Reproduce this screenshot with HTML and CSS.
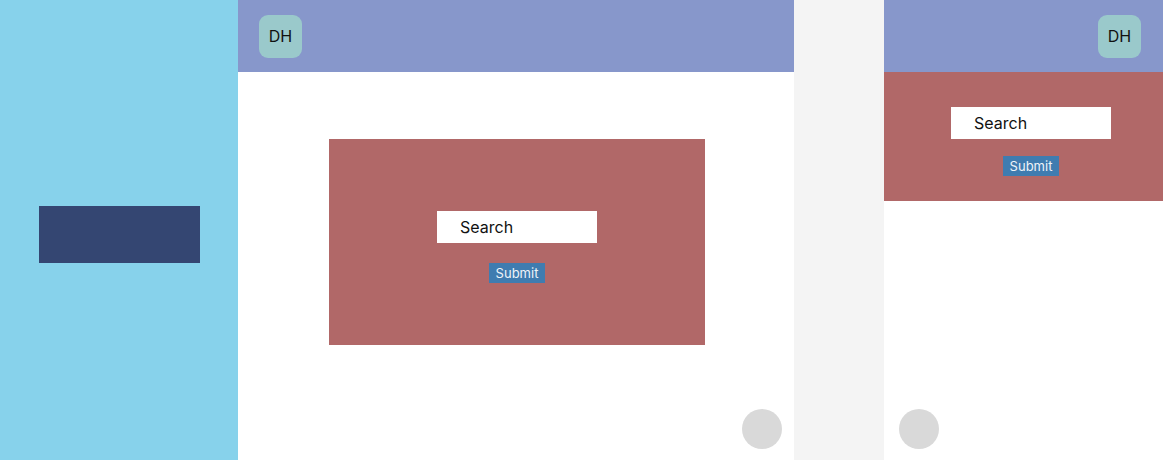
FILE: index.html
```html
<!DOCTYPE html>
<html>
<head>
<meta charset="utf-8">
<link rel="stylesheet" href="styles.css">
</head>
<body>
<div class="page">
  <aside class="sidebar">
    <div class="side-block"></div>
  </aside>
  <section class="panel panel-main">
    <header class="topbar">
      <div class="avatar">DH</div>
    </header>
    <div class="content">
      <div class="search-card">
        <div class="search-input">Search</div>
        <button class="submit">Submit</button>
      </div>
    </div>
    <div class="fab"></div>
  </section>
  <div class="gutter"></div>
  <section class="panel panel-mobile">
    <header class="topbar topbar-right">
      <div class="avatar">DH</div>
    </header>
    <div class="search-band">
      <div class="search-input">Search</div>
      <button class="submit">Submit</button>
    </div>
    <div class="fab fab-left"></div>
  </section>
</div>
</body>
</html>
```

FILE: styles.css
```css
* { box-sizing: border-box; }
html, body { margin: 0; padding: 0; }
body {
  width: 1163px;
  height: 460px;
  overflow: hidden;
  font-family: Inter, "Noto Sans", sans-serif;
  background: #ffffff;
}
.page {
  display: flex;
  height: 460px;
  width: 1178px;
}
.sidebar {
  width: 238px;
  flex: none;
  background: #87d2eb;
  padding-top: 206px;
  padding-left: 39px;
}
.side-block {
  width: 161px;
  height: 57px;
  background: #344672;
}
.panel {
  position: relative;
  flex: none;
  background: #ffffff;
  height: 460px;
}
.panel-main { width: 556px; }
.panel-mobile { width: 294px; }
.topbar {
  height: 72px;
  background: #8797cb;
  display: flex;
  align-items: center;
  padding-left: 21px;
}
.topbar-right {
  justify-content: flex-end;
  padding-left: 0;
  padding-right: 37px;
}
.avatar {
  width: 43px;
  height: 43px;
  border-radius: 9px;
  background: #9ac9cb;
  display: flex;
  align-items: center;
  justify-content: center;
  font-size: 16px;
  color: #111;
}
.content {
  padding-top: 67px;
  padding-left: 91px;
}
.search-card {
  width: 376px;
  height: 206px;
  background: #b16868;
  display: flex;
  flex-direction: column;
  align-items: center;
  padding-top: 72px;
  gap: 20px;
}
.search-input {
  width: 160px;
  height: 32px;
  background: #ffffff;
  padding-left: 23px;
  display: flex;
  align-items: center;
  font-size: 16px;
  color: #111;
}
.submit {
  width: 56px;
  height: 20px;
  border: 0;
  padding: 0;
  background: #3f7cb0;
  color: #eef3f8;
  font-family: Inter, "Noto Sans", sans-serif;
  font-size: 13px;
  line-height: 20px;
}
.search-band {
  height: 129px;
  background: #b16868;
  display: flex;
  flex-direction: column;
  align-items: center;
  padding-top: 35px;
  gap: 17px;
}
.gutter {
  width: 90px;
  flex: none;
  background: #f4f4f4;
}
.fab {
  position: absolute;
  right: 12px;
  bottom: 11px;
  width: 40px;
  height: 40px;
  border-radius: 50%;
  background: #d9d9d9;
}
.fab-left {
  right: auto;
  left: 15px;
}
```
